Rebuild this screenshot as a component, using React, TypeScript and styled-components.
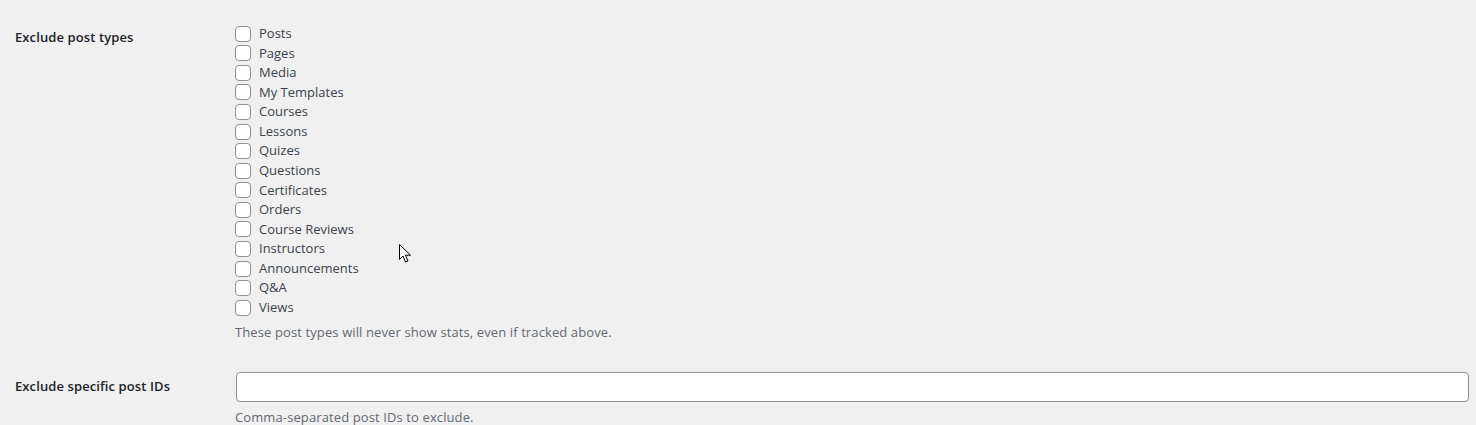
import React from "react";
import styled, { createGlobalStyle } from "styled-components";

const GlobalStyle = createGlobalStyle`
  html, body {
    margin: 0;
    padding: 0;
    background: #f0f0f1;
  }
  body {
    font-family: "Open Sans", "Noto Sans", sans-serif;
    font-size: 13px;
    color: #3c434a;
  }
`;

const Page = styled.div`
  position: relative;
  padding: 9px 0 0 15px;
`;

const FormTable = styled.div`
  display: grid;
  grid-template-columns: 220px 1fr;
`;

const Th = styled.div`
  padding: 20px 10px 20px 0;
  font-weight: 600;
  font-size: 13px;
  line-height: 1.3;
  color: #1d2327;
  letter-spacing: 0.1px;
`;

const Td = styled.div<{ $top: number }>`
  padding: ${(p) => p.$top}px 7px 15px 0;
`;

const Fieldset = styled.div`
  display: flex;
  flex-direction: column;
`;

const CheckLabel = styled.label`
  display: flex;
  align-items: center;
  height: 19.57px;
  line-height: 19.5px;
  color: #3c434a;
`;

const Box = styled.span`
  width: 16px;
  height: 16px;
  box-sizing: border-box;
  border: 1px solid #8c8f94;
  border-radius: 4px;
  background: #fff;
  margin-right: 8px;
  flex-shrink: 0;
`;

const Description = styled.p<{ $gap: number }>`
  margin: ${(p) => p.$gap}px 0 0;
  color: #646970;
  line-height: 19.5px;
  letter-spacing: 0.11px;
`;

const TextInput = styled.div`
  box-sizing: border-box;
  margin-left: 1px;
  height: 30px;
  border: 1px solid #8c8f94;
  border-radius: 4px;
  background: #fff;
`;

const Cursor = styled.svg`
  position: absolute;
  left: 399px;
  top: 244px;
`;

const postTypes = [
  "Posts",
  "Pages",
  "Media",
  "My Templates",
  "Courses",
  "Lessons",
  "Quizes",
  "Questions",
  "Certificates",
  "Orders",
  "Course Reviews",
  "Instructors",
  "Announcements",
  "Q&A",
  "Views",
];

export default function App() {
  return (
    <Page>
      <GlobalStyle />
      <FormTable>
        <Th>Exclude post types</Th>
        <Td $top={15}>
          <Fieldset>
            {postTypes.map((t) => (
              <CheckLabel key={t}>
                <Box />
                {t}
              </CheckLabel>
            ))}
          </Fieldset>
          <Description $gap={6}>
            These post types will never show stats, even if tracked above.
          </Description>
        </Td>
        <Th>Exclude specific post IDs</Th>
        <Td $top={14}>
          <TextInput />
          <Description $gap={6}>Comma-separated post IDs to exclude.</Description>
        </Td>
      </FormTable>
      <Cursor width="13" height="20" viewBox="0 0 13 20">
        <path
          d="M0.5 0.5 L0.5 15.5 L4 12 L6.5 18 L9 17 L6.5 11.2 L11.5 11.2 Z"
          fill="#fff"
          stroke="#000"
          strokeWidth="1"
          strokeLinejoin="round"
        />
      </Cursor>
    </Page>
  );
}
